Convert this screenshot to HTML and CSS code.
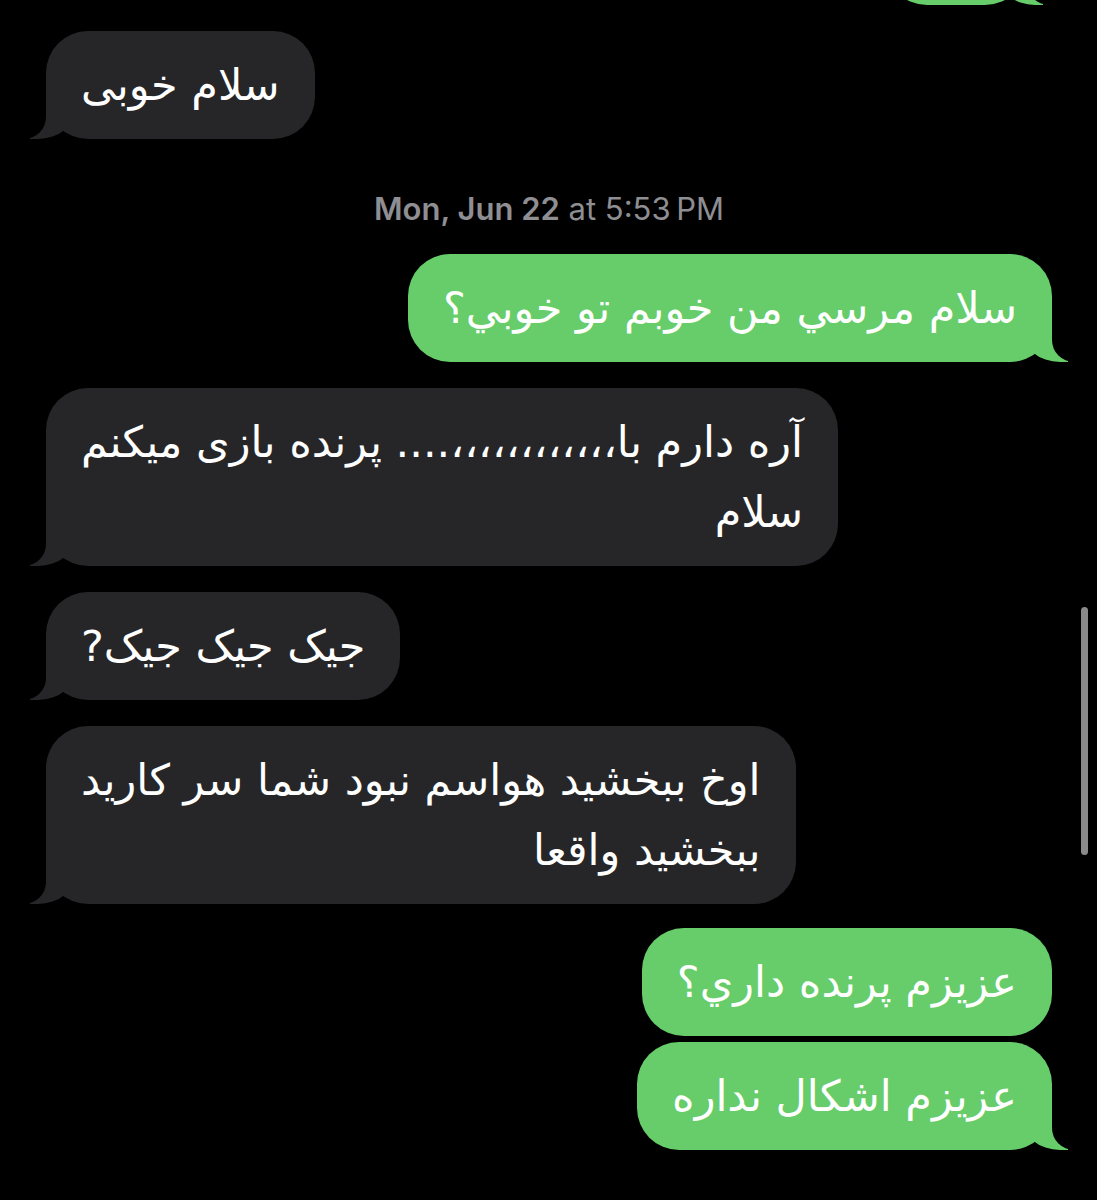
FILE: index.html
```html
<!DOCTYPE html>
<html lang="fa">

<head>
    <meta charset="UTF-8">
    <meta name="viewport" content="width=device-width, initial-scale=1.0">
    <title>Messages</title>

    <link rel="stylesheet" href="styles.css">

</head>

<body>
    <div class="thread">

        <div class="bubble out cut"></div>

        <div class="bubble in" dir="rtl">سلام خوبی</div>

        <div class="stamp"><b>Mon, Jun 22</b> at 5:53&#8201;PM</div>

        <div class="bubble out" dir="rtl">سلام مرسي من خوبم تو خوبي؟</div>

        <div class="bubble in" dir="rtl">آره دارم با،،،،،،،،،،،،.... پرنده بازی میکنم<br>سلام</div>

        <div class="bubble in" dir="rtl">جیک جیک جیک?</div>

        <div class="bubble in" dir="rtl">اوخ ببخشید هواسم نبود شما سر کارید<br>ببخشید واقعا</div>

        <div class="bubble out no-tail" dir="rtl">عزیزم پرنده داري؟</div>
        <div class="bubble out tight" dir="rtl">عزیزم اشکال نداره</div>

    </div>

    <div class="scroll-thumb"></div>
</body>

</html>
```

FILE: styles.css
```css
* {
    margin: 0;
    padding: 0;
    box-sizing: border-box;
}

body {
    background: #000;
    color: #fff;
    min-height: 1200px;
    overflow: hidden;
    font-family: "DejaVu Sans", sans-serif;
}

.thread {
    display: flex;
    flex-direction: column;
    gap: 26px;
    padding: 0 45px 0 46px;
}

.bubble {
    position: relative;
    font-size: 43px;
    line-height: 70px;
    padding: 19px 35px;
    border-radius: 42px;
    max-width: 820px;
    text-align: right;
    white-space: nowrap;
}

/* incoming, grey, tail on the left */
.in {
    align-self: flex-start;
    background: #262628;
}

.in::before {
    content: "";
    position: absolute;
    bottom: 0;
    left: -16px;
    width: 46px;
    height: 56px;
    background: #262628;
    border-bottom-right-radius: 38px 32px;
}

.in::after {
    content: "";
    position: absolute;
    bottom: 0;
    left: -60px;
    width: 60px;
    height: 56px;
    background: #000;
    border-bottom-right-radius: 22px;
}

/* outgoing, green, tail on the right */
.out {
    align-self: flex-end;
    background: #66cd6a;
}

.out::before {
    content: "";
    position: absolute;
    bottom: 0;
    right: -16px;
    width: 46px;
    height: 56px;
    background: #66cd6a;
    border-bottom-left-radius: 38px 32px;
}

.out::after {
    content: "";
    position: absolute;
    bottom: 0;
    right: -60px;
    width: 60px;
    height: 56px;
    background: #000;
    border-bottom-left-radius: 22px;
}

.no-tail {
    margin-top: -2px;
}

.no-tail::before,
.no-tail::after {
    display: none;
}

.tight {
    margin-top: -20px;
}

/* previous message, scrolled almost out of view */
.cut {
    width: 142px;
    height: 108px;
    margin-top: -103px;
    margin-right: 25px;
}

.stamp {
    align-self: center;
    font-family: Inter, "Liberation Sans", sans-serif;
    font-size: 31px;
    color: #8e8e93;
    margin: 25px 0 1px;
}

.stamp b {
    font-weight: 600;
}

.scroll-thumb {
    position: absolute;
    top: 607px;
    left: 1081px;
    width: 7px;
    height: 248px;
    border-radius: 4px;
    background: #8a8a8a;
}
```
